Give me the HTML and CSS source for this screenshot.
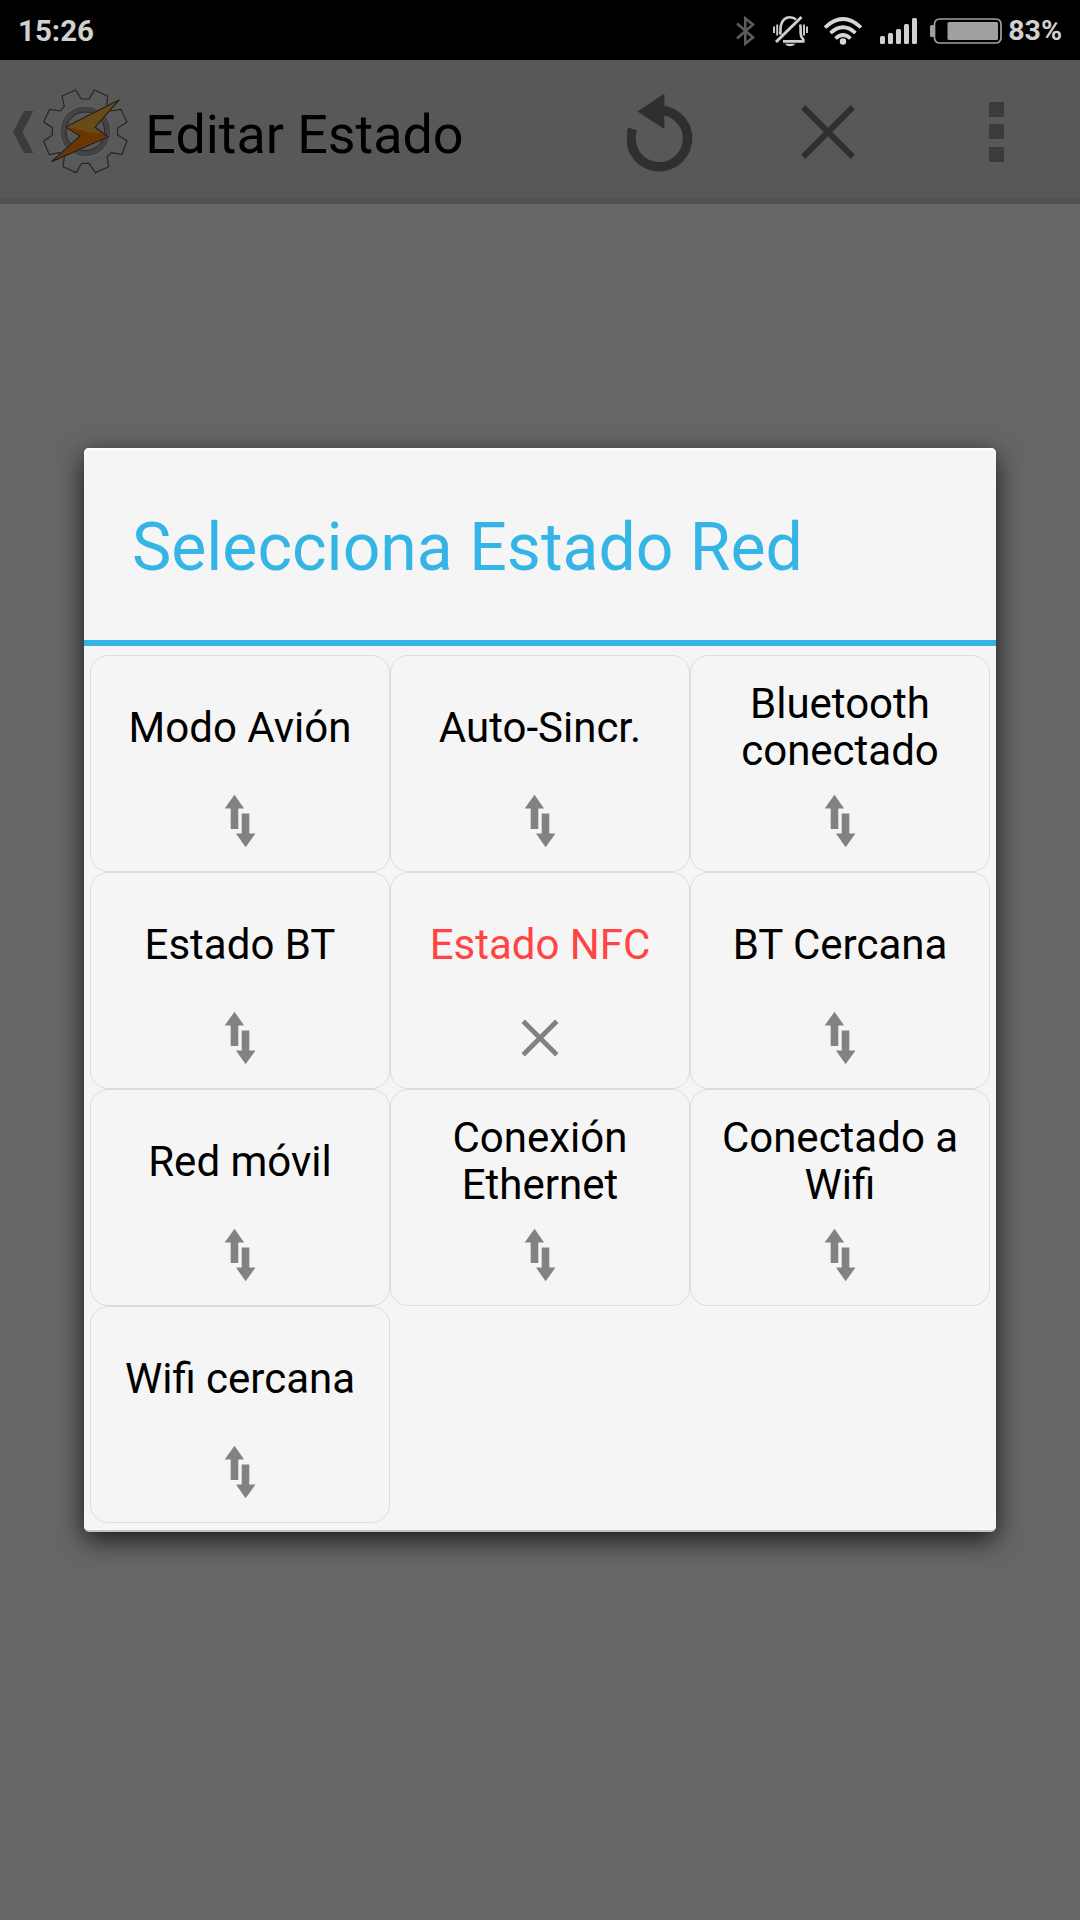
FILE: index.html
```html
<!DOCTYPE html>
<html lang="es">

<head>
  <meta charset="UTF-8">
  <meta name="viewport" content="width=device-width, initial-scale=1.0">
  <title>Editar Estado</title>
  <link rel="stylesheet" href="styles.css">
</head>

<body>
  <!-- Shared icons -->
  <svg class="sprite">
    <symbol id="arrows" viewBox="0 0 36 56">
      <path d="M12.5 1.8 22.1 15.5H16.3V36H8.7V15.5H2.7ZM19.7 20.5H27.3V40.5H33.5L23.6 54.3 14 40.5H19.7Z" />
    </symbol>
    <symbol id="cross" viewBox="0 0 40 40">
      <path d="M3.2 3.2 36.8 36.8M36.8 3.2 3.2 36.8" fill="none" stroke="#828282" stroke-width="4.8" />
    </symbol>
  </svg>

  <div class="statusbar">
    <span class="time">15:26</span>
    <div class="status-icons">
      <svg class="bluetooth" viewBox="0 0 22 32" width="22" height="32">
        <path d="M2 8.5 18 22.5 10.3 28.5V3.5L18 9.5 2 23.5" fill="none" stroke="#5c5c5c" stroke-width="2.6" />
      </svg>
      <svg class="bell" viewBox="0 0 36 32" width="36" height="32">
        <g fill="none" stroke="#d0d0d0" stroke-width="2.6">
          <path d="M8 19.5C9 16.5 8 13.5 9 10 10.5 4.5 13.5 2.3 18 2.3 20.3 2.3 22.3 3 24 4.5M28.3 9.5C29 14 28 19 29.5 22L31.3 24.5V26.4H11" />
          <path d="M4 27 29.5 2" stroke-width="3" />
          <path d="M2 11.5V18M5.2 9.5V20.5M32 9.5V20.5M35 11.5V18" stroke-width="1.9" />
        </g>
        <path d="M12.5 28.7H23.5Q18 34 12.5 28.7Z" fill="#d0d0d0" />
      </svg>
      <svg class="wifi" viewBox="0 0 40 30" width="40" height="30">
        <g fill="none" stroke="#d6d6d6" stroke-width="3.7">
          <path d="M2 11.5Q20-5.5 38 11.5" />
          <path d="M7.5 17Q20 5.5 32.5 17" />
          <path d="M12.5 22.5Q20 15.5 27.5 22.5" />
        </g>
        <circle cx="20" cy="25.5" r="3.2" fill="#d6d6d6" />
      </svg>
      <svg class="signal" viewBox="0 0 38 26" width="38" height="26">
        <g fill="#cfcfcf">
          <rect x="0" y="18" width="5" height="8" rx="1.5" />
          <rect x="8" y="15" width="5" height="11" rx="1.5" />
          <rect x="16" y="11" width="5" height="15" rx="1.5" />
          <rect x="24" y="6" width="5" height="20" rx="1.5" />
          <rect x="32" y="0" width="5" height="26" rx="1.5" />
        </g>
      </svg>
      <svg class="battery" viewBox="0 0 72 28" width="72" height="28">
        <rect x="4.5" y="2" width="66.5" height="24" rx="5" fill="none" stroke="#a0a0a0" stroke-width="1.7" />
        <rect x="0" y="8" width="4.5" height="12" rx="1.5" fill="#a0a0a0" />
        <rect x="17.5" y="5" width="50.5" height="18" rx="1.5" fill="#a0a0a0" />
      </svg>
      <span class="percent">83%</span>
    </div>
  </div>

  <div class="actionbar">
    <svg class="back" viewBox="0 0 21 42" width="21" height="42">
      <path d="M11 0H20.5L9.5 21 20.5 42H11L0 21Z" fill="#3b3b3b" />
    </svg>
    <svg class="logo" viewBox="130 264 256 260" width="85.33" height="86.67">
      <path d="M245 297H268L284 270 324 288 321 320 334 333 364 328 382 366 354 384V405L382 422 367 463 335 458 322 471 327 500 287 518 268 490H246L230 518 190 500 194 470 180 458 149 464 132 424 158 405V383L132 366 150 328 182 333 194 320 187 288 228 270Z" fill="#595959" stroke="#252525" stroke-width="3.5" />
      <circle cx="257" cy="394" r="67" fill="none" stroke="#434343" stroke-width="17" />
      <circle cx="257" cy="394" r="77" fill="none" stroke="#686868" stroke-width="2" />
      <circle cx="257" cy="394" r="58" fill="#575757" stroke="#252525" stroke-width="3" />
      <path d="M358 300 198 381 241 408 156 485 325 410 286 382Z" fill="#6b3600" />
      <path d="M358 300 198 381Q235 386 276 400L310 399 286 382Z" fill="#6a4a16" />
      <path d="M358 300 198 381 241 408 156 485 325 410 286 382Z" fill="none" stroke="#6b6452" stroke-width="7" stroke-linejoin="round" opacity=".4" />
      <path d="M358 300 198 381 241 408 156 485 325 410 286 382Z" fill="none" stroke="#221c12" stroke-width="3.5" stroke-linejoin="round" />
    </svg>
    <h1>Editar Estado</h1>
    <svg class="undo" viewBox="0 0 68 82" width="68" height="82">
      <path d="M34.5 18.2A28.3 28.3 0 1 1 5.6 37" fill="none" stroke="#2f2f2f" stroke-width="9.5" />
      <path d="M37.3 1.5V37L10.5 19.5Z" fill="#2f2f2f" />
    </svg>
    <svg class="close" viewBox="0 0 54 54" width="54" height="54">
      <path d="M2.2 2.2 51.8 51.8M51.8 2.2 2.2 51.8" stroke="#2f2f2f" stroke-width="6" />
    </svg>
    <svg class="more" viewBox="0 0 15 60" width="15" height="60">
      <path d="M0 0H15V15H0ZM0 22H15V37H0ZM0 45H15V60H0Z" fill="#3b3b3b" />
    </svg>
  </div>

  <div class="dialog">
    <h2>Selecciona Estado Red</h2>
    <div class="grid">
      <div class="item"><span>Modo Avión</span><svg><use href="#arrows" /></svg></div>
      <div class="item"><span>Auto-Sincr.</span><svg><use href="#arrows" /></svg></div>
      <div class="item"><span>Bluetooth<br>conectado</span><svg><use href="#arrows" /></svg></div>
      <div class="item"><span>Estado BT</span><svg><use href="#arrows" /></svg></div>
      <div class="item disabled"><span>Estado NFC</span><svg><use href="#cross" /></svg></div>
      <div class="item"><span>BT Cercana</span><svg><use href="#arrows" /></svg></div>
      <div class="item"><span>Red móvil</span><svg><use href="#arrows" /></svg></div>
      <div class="item"><span>Conexión<br>Ethernet</span><svg><use href="#arrows" /></svg></div>
      <div class="item"><span>Conectado a<br>Wifi</span><svg><use href="#arrows" /></svg></div>
      <div class="item"><span>Wifi cercana</span><svg><use href="#arrows" /></svg></div>
    </div>
  </div>
</body>

</html>
```
FILE: styles.css
```css
* {
  box-sizing: border-box;
}

body {
  width: 1080px;
  height: 1920px;
  margin: 0;
  overflow: hidden;
  background-color: #666;
  font-family: Roboto, sans-serif;
  color: #000;
}

svg {
  display: block;
  flex: none;
}

.sprite {
  display: none;
}

.statusbar {
  display: flex;
  align-items: center;
  justify-content: space-between;
  height: 60px;
  padding: 1px 18px 0;
  background: #000;
  color: #d0d0d0;
  font-size: 29.5px;
  font-weight: bold;
}

.status-icons {
  display: flex;
  align-items: center;
}

.bell {
  margin-left: 15px;
}

.wifi {
  margin-left: 15px;
}

.signal {
  margin-left: 17px;
}

.battery {
  margin-left: 12px;
}

.percent {
  margin-left: 6px;
  font-size: 28.5px;
}

.actionbar {
  display: flex;
  align-items: center;
  height: 144px;
  padding-left: 13px;
  background: #585858;
  border-bottom: 6px solid #515151;
}

.back {
  margin-top: 6px;
}

.logo {
  margin: 4px 0 0 9px;
}

h1 {
  width: 482px;
  margin: 11px 0 0 17px;
  font-size: 53.8px;
  font-weight: normal;
  line-height: 64px;
  white-space: nowrap;
}

.undo {
  margin-top: 8px;
}

.close {
  margin: 6px 0 0 106px;
}

.more {
  margin: 6px 0 0 134px;
}

.dialog {
  width: 912px;
  height: 1084px;
  margin: 244px auto 0;
  background: #f5f5f5;
  border-radius: 5px;
  border-bottom: 2px solid #c4c4c4;
  box-shadow: 0 8px 26px rgba(0, 0, 0, 0.75), inset 0 2px 0 #fdfdfd;
}

h2 {
  height: 198px;
  margin: 0;
  padding: 7px 48px 0;
  border-bottom: 6px solid #34b5e5;
  color: #34b5e5;
  font-size: 66.1px;
  font-weight: normal;
  line-height: 185px;
}

.grid {
  display: grid;
  grid-template-columns: repeat(3, 300px);
  grid-auto-rows: 217px;
  padding: 9px 6px 0;
}

.item {
  display: flex;
  flex-direction: column;
  align-items: center;
  border: 1px solid #dcdcdc;
  border-radius: 18px;
  font-size: 42px;
  line-height: 47px;
  text-align: center;
}

.item span {
  display: flex;
  align-items: center;
  height: 142px;
}

.item svg {
  width: 36px;
  height: 56px;
  margin-top: -5px;
  fill: #828282;
}

.disabled {
  color: #ff4444;
}

.disabled svg {
  width: 40px;
  height: 40px;
  margin-top: 3px;
}
```
